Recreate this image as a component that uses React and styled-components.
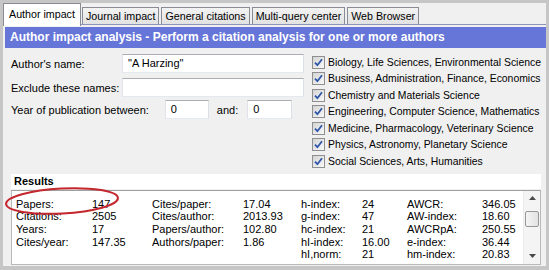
import React from 'react';
import styled, { createGlobalStyle } from 'styled-components';

const GlobalStyle = createGlobalStyle`
  html, body { margin: 0; padding: 0; }
  body {
    background: #c6c6c6;
    font-family: "Liberation Sans", Arial, sans-serif;
    color: #000;
  }
`;

const Frame = styled.div`
  position: relative;
  width: 549px;
  height: 270px;
  box-sizing: border-box;
  padding: 3px 3px 4px 3px;
  background: #c6c6c6;
  overflow: hidden;
`;

const TabControl = styled.div`
  height: 100%;
  background: #f0f0f0;
  display: flex;
  flex-direction: column;
`;

const TabStrip = styled.div`
  position: relative;
  z-index: 1;
  display: flex;
  align-items: flex-end;
  gap: 2px;
  height: 21px;
`;

const Tab = styled.div`
  box-sizing: border-box;
  height: ${p => (p.$active ? 23 : 17)}px;
  margin-bottom: ${p => (p.$active ? -2 : 0)}px;
  margin-right: ${p => (p.$active ? -1 : 0)}px;
  padding: 0 ${p => (p.$active ? 5 : 3)}px;
  border: 1px solid #898c95;
  border-bottom: none;
  background: ${p => (p.$active ? '#ffffff' : 'linear-gradient(#f3f3f3, #e2e2e2)')};
  font-size: 10.7px;
  line-height: ${p => (p.$active ? 20 : 16)}px;
  white-space: nowrap;
`;

const TabPage = styled.div`
  flex: 1;
  display: flex;
  flex-direction: column;
  border-top: 1px solid #8e93b8;
  padding-top: 2px;
`;

const Header = styled.div`
  height: 21px;
  margin-left: 2px;
  padding-left: 5px;
  background: #6675d8;
  color: #fff;
  font-weight: bold;
  font-size: 12px;
  line-height: 21px;
  white-space: nowrap;
`;

const Form = styled.div`
  display: flex;
  gap: 8px;
  padding: 6px 0 0 8px;
`;

const Fields = styled.div`
  flex: none;
  width: 293px;
  display: flex;
  flex-direction: column;
`;

const FieldRow = styled.div`
  display: flex;
  align-items: center;
  height: 19px;
  margin-bottom: ${p => p.$gap || 0}px;
  font-size: 11px;
`;

const Label = styled.span`
  width: ${p => (p.$w ? `${p.$w}px` : 'auto')};
  margin-right: ${p => p.$mr || 0}px;
  white-space: nowrap;
`;

const TextBox = styled.div`
  box-sizing: border-box;
  width: ${p => (p.$w ? `${p.$w}px` : 'auto')};
  flex: ${p => (p.$w ? 'none' : 1)};
  height: 19px;
  padding: 0 5px;
  background: #fff;
  border: 1px solid;
  border-color: #abadb3 #dbdfe6 #e3e9ef #e2e3ea;
  font-size: 11px;
  line-height: 17px;
  margin-right: ${p => p.$mr || 0}px;
`;

const CheckList = styled.div`
  flex: none;
  display: flex;
  flex-direction: column;
`;

const CheckRow = styled.div`
  display: flex;
  align-items: center;
  gap: 3px;
  height: 16.5px;
  font-size: 10.4px;
  white-space: nowrap;
`;

const Box = styled.span`
  box-sizing: border-box;
  width: 13px;
  height: 13px;
  border: 1px solid #8e8f8f;
  background: linear-gradient(135deg, #d4d4d4, #f9f9f9);
  display: flex;
  align-items: center;
  justify-content: center;
`;

const Results = styled.div`
  margin: 4px 5px 0 8px;
  display: flex;
  flex-direction: column;
`;

const ResultsTitle = styled.div`
  height: 15px;
  padding-left: 3px;
  background: #fff;
  font-weight: bold;
  font-size: 11px;
  line-height: 15px;
`;

const ListBox = styled.div`
  margin-top: 1px;
  height: 75px;
  box-sizing: border-box;
  display: flex;
  background: #fff;
  border: 1px solid #b9b9b9;
  border-top-color: #a0a0a0;
`;

const ListGrid = styled.div`
  flex: 1;
  display: grid;
  grid-template-columns: 76px 60px 91px 58px 61px 45px 75px 1fr;
  align-content: start;
  padding: 7px 0 0 4px;
  font-size: 11px;
  line-height: 12.7px;
  overflow: hidden;
  white-space: nowrap;
`;

const ScrollBar = styled.div`
  width: 16px;
  display: flex;
  flex-direction: column;
  align-items: center;
  background: #f4f4f4;
  border-left: 1px solid #ececec;
`;

const ArrowBtn = styled.div`
  height: 15px;
  width: 100%;
  display: flex;
  align-items: center;
  justify-content: center;
`;

const Thumb = styled.div`
  box-sizing: border-box;
  width: 14px;
  height: 16px;
  margin-top: 5px;
  border: 1px solid #979797;
  border-radius: 2px;
  background: linear-gradient(90deg, #f4f4f4, #e2e2e2);
`;

const Track = styled.div`
  flex: 1;
`;

const Overlay = styled.svg`
  position: absolute;
  left: 0;
  top: 0;
  pointer-events: none;
`;

const tabs = ['Author impact', 'Journal impact', 'General citations', 'Multi-query center', 'Web Browser'];

const subjects = [
  'Biology, Life Sciences, Environmental Science',
  'Business, Administration, Finance, Economics',
  'Chemistry and Materials Science',
  'Engineering, Computer Science, Mathematics',
  'Medicine, Pharmacology, Veterinary Science',
  'Physics, Astronomy, Planetary Science',
  'Social Sciences, Arts, Humanities',
];

const rows = [
  ['Papers:', '147', 'Cites/paper:', '17.04', 'h-index:', '24', 'AWCR:', '346.05'],
  ['Citations:', '2505', 'Cites/author:', '2013.93', 'g-index:', '47', 'AW-index:', '18.60'],
  ['Years:', '17', 'Papers/author:', '102.80', 'hc-index:', '21', 'AWCRpA:', '250.55'],
  ['Cites/year:', '147.35', 'Authors/paper:', '1.86', 'hI-index:', '16.00', 'e-index:', '36.44'],
  ['', '', '', '', 'hI,norm:', '21', 'hm-index:', '20.83'],
];

const Check = () => (
  <svg width="9" height="9" viewBox="0 0 9 9">
    <path d="M1 4.6 L3.4 7.2 L8 1.2" fill="none" stroke="#2d55a8" strokeWidth="1.8" />
  </svg>
);

const Arrow = ({ down }) => (
  <svg width="7" height="4" viewBox="0 0 7 4">
    <path d={down ? 'M0 0 H7 L3.5 4 Z' : 'M0 4 H7 L3.5 0 Z'} fill="#4a4a4a" />
  </svg>
);

export default function App() {
  return (
    <>
      <GlobalStyle />
      <Frame>
        <TabControl>
          <TabStrip>
            {tabs.map((t, i) => (
              <Tab key={t} $active={i === 0}>{t}</Tab>
            ))}
          </TabStrip>
          <TabPage>
            <Header>Author impact analysis - Perform a citation analysis for one or more authors</Header>
            <Form>
              <Fields>
                <FieldRow $gap={5}>
                  <Label $w={111}>Author's name:</Label>
                  <TextBox>"A Harzing"</TextBox>
                </FieldRow>
                <FieldRow $gap={3}>
                  <Label $w={111}>Exclude these names:</Label>
                  <TextBox />
                </FieldRow>
                <FieldRow>
                  <Label $mr={16}>Year of publication between:</Label>
                  <TextBox $w={44} $mr={8}>0</TextBox>
                  <Label $mr={9}>and:</Label>
                  <TextBox $w={45}>0</TextBox>
                </FieldRow>
              </Fields>
              <CheckList>
                {subjects.map(s => (
                  <CheckRow key={s}>
                    <Box><Check /></Box>
                    {s}
                  </CheckRow>
                ))}
              </CheckList>
            </Form>
            <Results>
              <ResultsTitle>Results</ResultsTitle>
              <ListBox>
                <ListGrid>
                  {rows.flatMap((r, i) => r.map((c, j) => <span key={`${i}-${j}`}>{c || '\u00a0'}</span>))}
                </ListGrid>
                <ScrollBar>
                  <ArrowBtn><Arrow /></ArrowBtn>
                  <Thumb />
                  <Track />
                  <ArrowBtn><Arrow down /></ArrowBtn>
                </ScrollBar>
              </ListBox>
            </Results>
          </TabPage>
        </TabControl>
        <Overlay width="549" height="270">
          <ellipse cx="62" cy="201" rx="56" ry="12.5" transform="rotate(-3 62 201)" fill="none" stroke="#c4262d" strokeWidth="2" />
        </Overlay>
      </Frame>
    </>
  );
}
